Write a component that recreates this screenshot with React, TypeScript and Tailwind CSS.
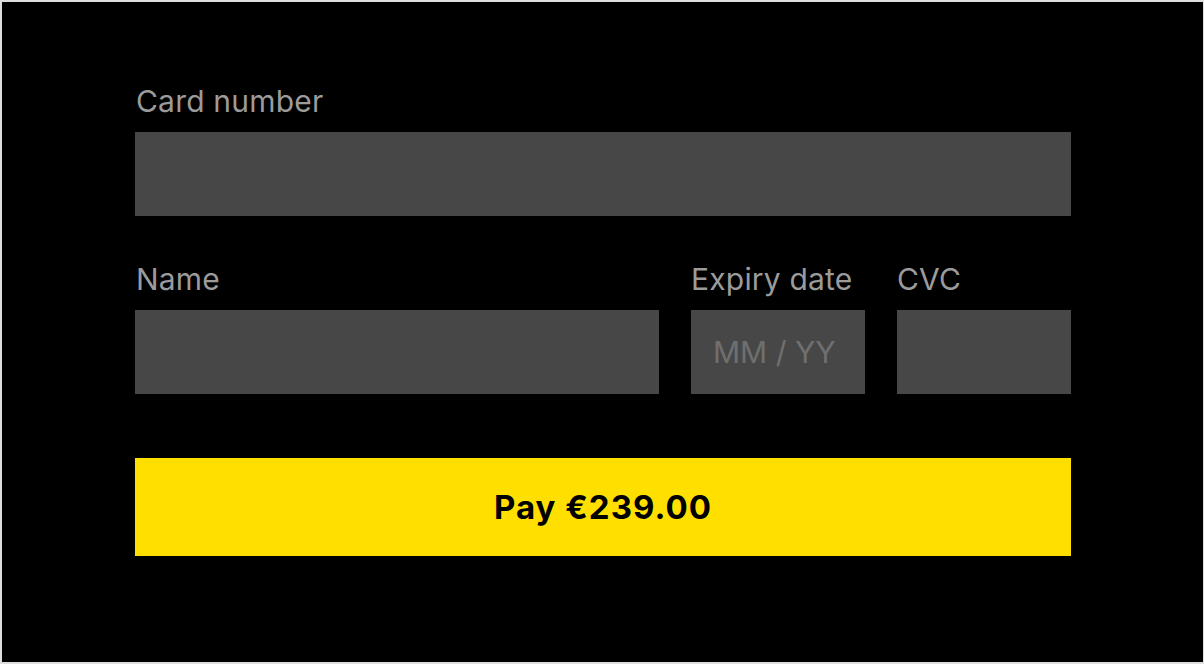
export default function App() {
  const font = { fontFamily: 'Inter, "Noto Sans", sans-serif' };
  return (
    <div className="w-[1204px] h-[664px] bg-[#dedede] pt-[2px] pl-[2px] pb-[2px] pr-[1px]" style={font}>
      <div className="w-full h-full bg-black pl-[133px] pt-[82px]">
        <div className="w-[936px] flex flex-col">
          <label className="block text-[30px] leading-[34px] tracking-[0.2px] text-[#9b9b9b] pl-[1px]">Card number</label>
          <div className="mt-[14px] h-[84px] bg-[#474747]" />
          <div className="mt-[46px] flex gap-[32px]">
            <div className="w-[524px] flex flex-col">
              <label className="block text-[30px] leading-[34px] tracking-[0.2px] text-[#9b9b9b] pl-[1px]">Name</label>
              <div className="mt-[14px] h-[84px] bg-[#474747]" />
            </div>
            <div className="w-[174px] flex flex-col">
              <label className="block text-[30px] leading-[34px] tracking-[0.2px] text-[#9b9b9b] whitespace-nowrap">Expiry date</label>
              <div className="mt-[14px] h-[84px] bg-[#474747] flex items-center pl-[22px] text-[30px] text-[#6f6f6f] whitespace-nowrap">MM / YY</div>
            </div>
            <div className="w-[174px] flex flex-col">
              <label className="block text-[30px] leading-[34px] tracking-[0.2px] text-[#9b9b9b]">CVC</label>
              <div className="mt-[14px] h-[84px] bg-[#474747]" />
            </div>
          </div>
          <button className="mt-[64px] h-[98px] w-full bg-[#ffdf00] text-black font-bold text-[33px] tracking-[1px] pt-[2px] flex items-center justify-center">
            Pay €239.00
          </button>
        </div>
      </div>
    </div>
  );
}
